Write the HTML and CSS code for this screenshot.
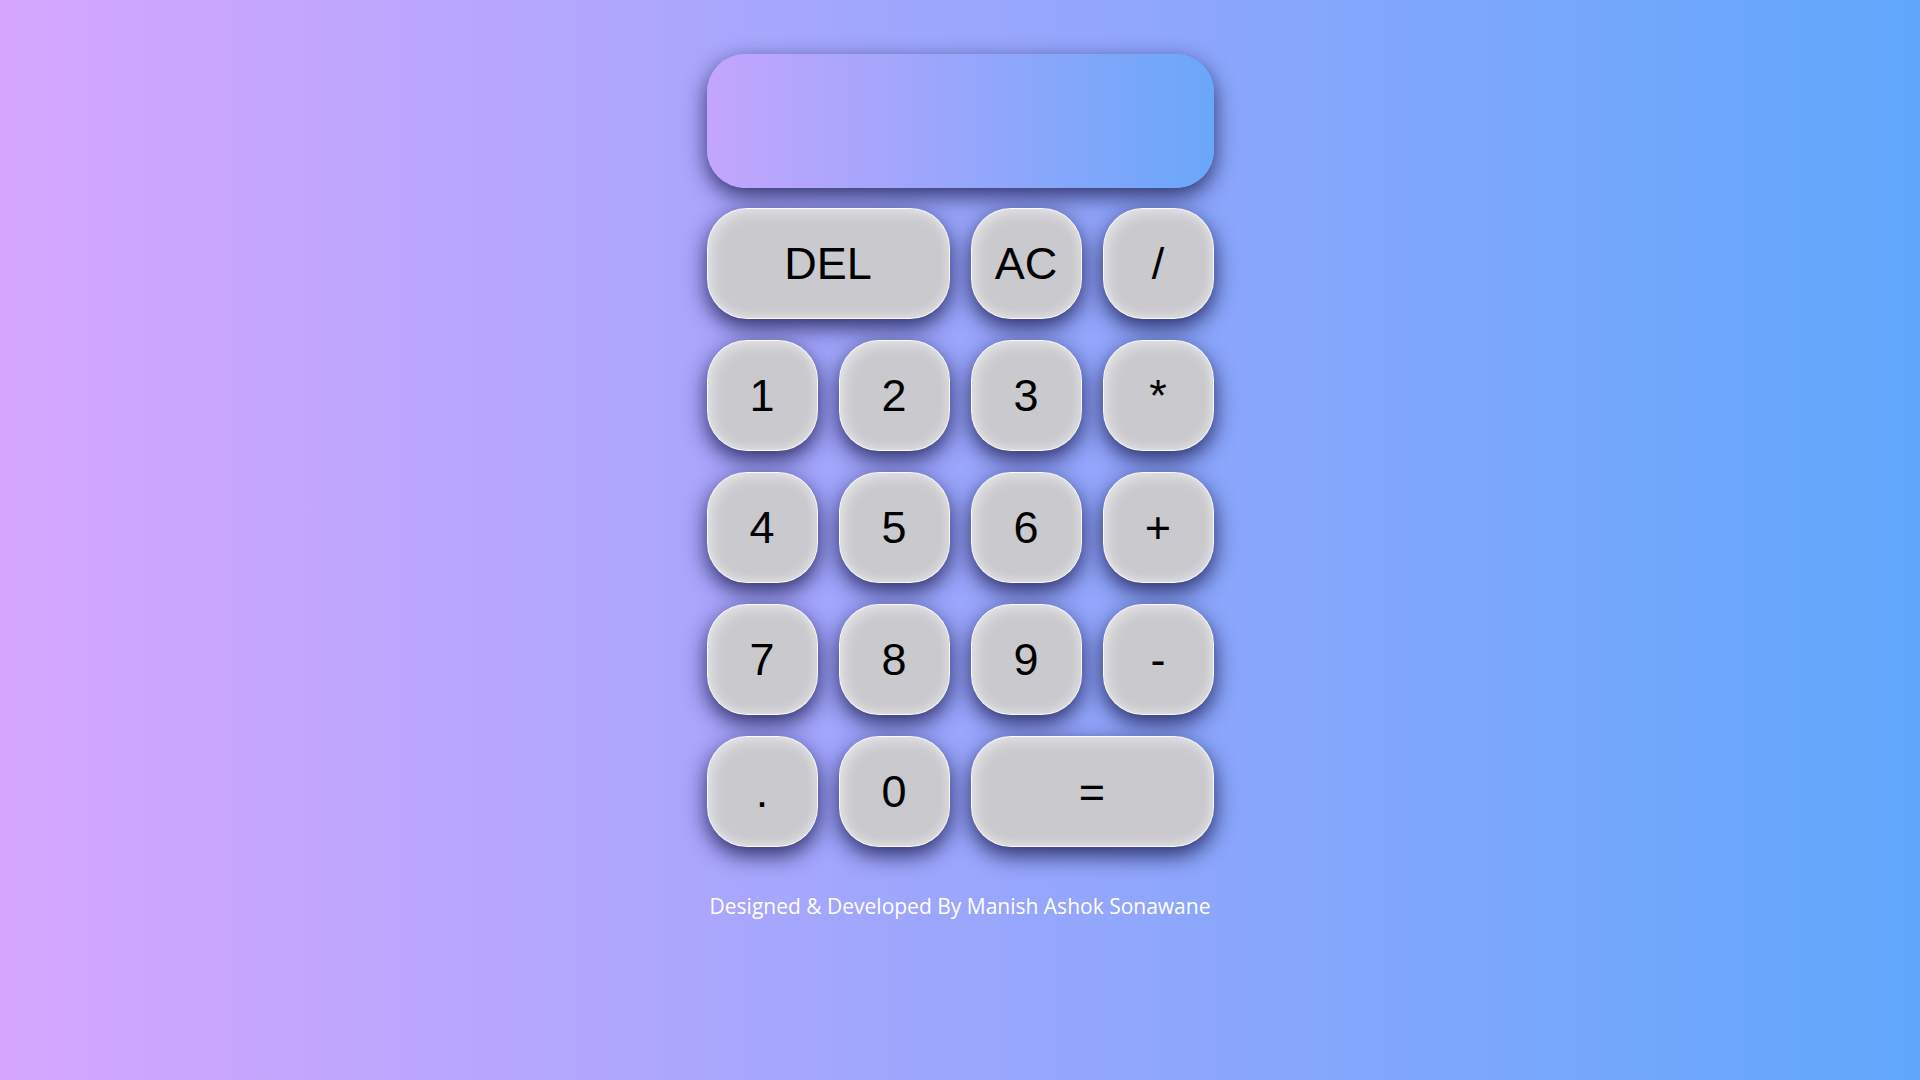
FILE: index.html
```html
<!DOCTYPE html>
<html lang="en">
<head>
<meta charset="utf-8">
<title>Calculator</title>
<link rel="stylesheet" href="styles.css">
</head>
<body>
<main class="calculator">
  <div class="display"></div>
  <div class="keys">
    <button class="key wide">DEL</button>
    <button class="key">AC</button>
    <button class="key">/</button>
    <button class="key">1</button>
    <button class="key">2</button>
    <button class="key">3</button>
    <button class="key">*</button>
    <button class="key">4</button>
    <button class="key">5</button>
    <button class="key">6</button>
    <button class="key">+</button>
    <button class="key">7</button>
    <button class="key">8</button>
    <button class="key">9</button>
    <button class="key">-</button>
    <button class="key">.</button>
    <button class="key">0</button>
    <button class="key wide">=</button>
  </div>
  <p class="credit">Designed &amp; Developed By Manish Ashok Sonawane</p>
</main>
</body>
</html>
```

FILE: styles.css
```css
html, body {
  margin: 0;
  padding: 0;
  height: 100%;
}
body {
  background: linear-gradient(to right, #d5a6fe, #60a7fb);
  font-family: "Liberation Sans", Arial, sans-serif;
  display: flex;
  justify-content: center;
}
.calculator {
  width: 507px;
  padding-top: 54px;
  display: flex;
  flex-direction: column;
}
.display {
  height: 134px;
  border-radius: 38px;
  background: linear-gradient(to right, #c4a5fd, #6aa7f9);
  box-shadow: 0 8px 22px rgba(20, 20, 70, 0.8);
  margin-bottom: 20px;
}
.keys {
  display: grid;
  grid-template-columns: repeat(4, 111px);
  grid-auto-rows: 111px;
  gap: 21px;
}
.key {
  border: 1px solid rgba(255, 255, 255, 0.9);
  border-radius: 40px;
  background: #c9c9ce;
  box-shadow: inset 4px 4px 14px rgba(255, 255, 255, 0.5),
              inset -3px -3px 10px rgba(255, 255, 255, 0.3),
              0 8px 22px rgba(20, 20, 70, 0.85);
  font-family: "Liberation Sans", Arial, sans-serif;
  font-size: 45px;
  color: #000;
  padding: 0;
}
.wide {
  grid-column: span 2;
}
.credit {
  margin: 44px 0 0;
  text-align: center;
  white-space: nowrap;
  color: #fff;
  font-family: "Open Sans", "Noto Sans", sans-serif;
  font-size: 21px;
  line-height: 30px;
}
```
